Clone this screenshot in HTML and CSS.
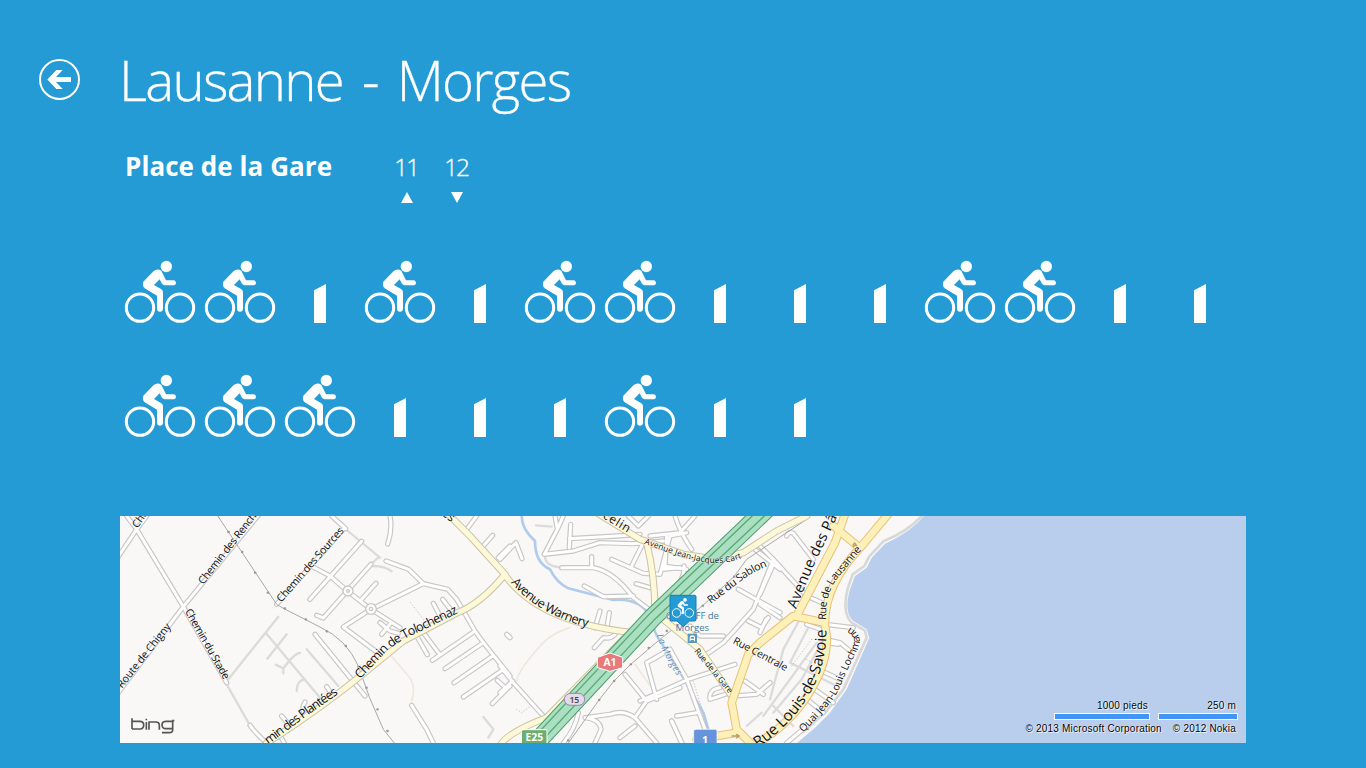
FILE: index.html
```html
<!DOCTYPE html>
<html lang="fr">
<head>
<meta charset="utf-8">
<title>Lausanne - Morges</title>
<link rel="stylesheet" href="styles.css">
</head>
<body>
<svg class="sprites" aria-hidden="true">
  <symbol id="bike" viewBox="0 0 240 240">
    <g fill="none" stroke="#fff" stroke-width="9"><circle cx="60" cy="173" r="41"/><circle cx="180" cy="173" r="41"/></g>
    <circle cx="139" cy="49.500" r="17" fill="#fff"/>
    <path fill="#fff" d="M101 63Q112 54 124 62L138 91H162Q168 93 168 98 168 105 162 106H133Q128 105 125 100L119 88 102 105 124 118Q129 121 129 128V177Q128 185 120 185 112 185 111 177V137L74 115Q66 107 70 95Z"/>
  </symbol>
  <symbol id="dock" viewBox="0 0 240 240"><path fill="#fff" d="M102 121L138 102V219H102Z"/></symbol>
</svg>
<header class="header">
  <a class="back" aria-label="Retour"><svg viewBox="0 0 123 123"><circle cx="61.500" cy="61.500" r="58.500"/><path d="M25 61.500L52 33H71L51 54H96V69H51L71 90H52Z"/></svg></a>
  <h1 class="title">Lausanne - Morges</h1>
</header>
<section class="station">
  <h2 class="station-name">Place de la Gare</h2>
  <div class="count"><span>11</span><svg viewBox="0 0 12 11"><path d="M6 0L12 11H0Z"/></svg></div>
  <div class="count"><span>12</span><svg viewBox="0 0 12 11"><path d="M0 0H12L6 11Z"/></svg></div>
</section>
<div class="slots">
  <svg><use href="#bike"/></svg><svg><use href="#bike"/></svg><svg><use href="#dock"/></svg><svg><use href="#bike"/></svg><svg><use href="#dock"/></svg><svg><use href="#bike"/></svg><svg><use href="#bike"/></svg><svg><use href="#dock"/></svg><svg><use href="#dock"/></svg><svg><use href="#dock"/></svg><svg><use href="#bike"/></svg><svg><use href="#bike"/></svg><svg><use href="#dock"/></svg><svg><use href="#dock"/></svg>
  <svg><use href="#bike"/></svg><svg><use href="#bike"/></svg><svg><use href="#bike"/></svg><svg><use href="#dock"/></svg><svg><use href="#dock"/></svg><svg><use href="#dock"/></svg><svg><use href="#bike"/></svg><svg><use href="#dock"/></svg><svg><use href="#dock"/></svg>
</div>
<div class="map">
<svg class="map-canvas" viewBox="0 0 3378 681">
  <defs>
    <g id="minor">
      <path d="M50 40L190 272M20 0L50 40 80 0M50 40L-5 122M190 272L-5 530M190 272L420 -8M190 272L320 500M390 628Q405 650 440 681M485 600L510 630M555 558Q540 580 560 600M475 650L495 685M470 265L670 40"/>
      <g transform="translate(570 0)">
        <path d="M65 0L107 38M240 0Q248 40 233 84M155 76L0 250M183 145L40 306 20 298M0 148L60 180 112 225 183 280 270 335M198 202L155 250M228 135L296 160 340 203 413 220 440 250 495 345 520 380 600 480M340 203L183 280 100 333 200 408M210 320L240 345 265 352M240 325L215 355M15 355L165 540M370 262L390 300M398 250L425 285M340 350L385 410M320 360L352 416M495 345L367 433M520 380L405 458M548 420L432 500M578 462L460 543M600 510L547 563M562 493L585 515M305 568L350 640 370 681M470 40L500 0M520 90L548 58M565 125L600 90M590 355L600 365M50 512L62 530"/>
      </g>
      <g transform="translate(1140 0)">
        <path d="M0 130L48 80 66 128M165 0L172 40 133 115 220 105 300 80 400 83 490 75M212 25L208 95M208 68L350 60 420 55M190 0L172 40M385 0L415 30 445 0M185 155L280 155M275 122V155M280 155Q340 165 400 245L460 290M253 210L310 242 400 240M335 130L430 172 480 175 500 100 510 60 560 50M430 80L395 150M408 203L450 215M490 150L560 160M300 285L285 335M328 290L320 340M345 355Q330 370 310 365L283 395M0 450L40 500 130 600M0 530L38 495M375 475L440 555 540 515M440 555L405 605 470 681M405 605Q370 580 330 595L255 605Q300 610 303 640L285 681M405 630L360 665M515 615L545 681M235 590Q225 640 190 681"/>
      </g>
      <g transform="translate(1560 0)">
        <path d="M30 60L120 50 165 0M105 0Q120 50 155 100M80 60L75 155M132 150Q138 180 95 235M70 160L120 155M40 430L90 400 140 490M90 400L20 440 50 550M0 555L145 490 285 445M140 490L195 640M110 600L170 590M270 530L210 550Q205 520 240 515M95 615L130 690M315 495L370 535M280 540L350 535 390 500M345 100L420 160M400 130L340 280 250 380 200 415M295 220L420 290M385 305L365 335 325 315M150 330L180 360 250 360"/>
      </g>
      <g transform="translate(1920 0)">
        <path d="M80 60Q85 45 100 52L160 130M0 90L40 130 140 240 185 260M40 145L0 235M0 265L60 305M0 350L18 310M140 325L195 345M195 325L280 335M195 370L240 380 270 405M195 380L235 385M80 681L140 630M175 460L240 490M150 510L220 560M135 545L190 590"/>
      </g>
    </g>
    <g id="yellow">
      <path d="M440 681Q600 580 740 465L850 375 1012 290Q1080 265 1155 175M980 -10L1050 60 1150 170Q1250 320 1540 350M1430 -10L1560 70 1690 115 1790 130 1870 110 1970 45 2060 0M1580 80Q1605 180 1605 290L1740 400 1835 540M1140 690Q1160 650 1280 605L1510 370"/>
    </g>
    <g id="gold">
      <path d="M2310 -12L2225 90Q2110 210 2115 330 2135 410 2080 510 2020 620 1900 690M2180 -20L2145 80 2035 290M2140 30L2215 92M2115 320L2020 300 1920 380 1885 415 1835 560 1850 640 1900 690M1850 650L1730 670"/>
    </g>
    <path id="l1" d="M250 207L422 -14"/><path id="l2" d="M484 260L680 37"/><path id="l3" d="M6 518L160 325"/><path id="l4" d="M194 286L316 500"/><path id="l5" d="M52 38L100 -28"/>
    <path id="l6" d="M720 490L800 406Q850 365 900 347L1030 283"/><path id="l7" d="M445 686L560 600 660 530"/><path id="l8" d="M1172 200Q1260 300 1412 336"/><path id="l9" d="M1432 -4L1534 57"/><path id="l10" d="M964 -4L1000 24"/>
    <path id="l11" d="M1572 83C1690 125 1780 165 1868 124"/><path id="l12" d="M1772 264L1850 205Q1900 165 1948 149"/><path id="l13" d="M1610 358Q1630 420 1676 486"/><path id="l15" d="M1722 406L1834 542"/><path id="l16" d="M1837 381L2004 470"/>
    <path id="l17" d="M2028 280L2085 140 2170 -35"/><path id="l18" d="M2117 312L2120 265Q2125 225 2150 190L2234 90"/><path id="l19" d="M1914 696C2050 600 2125 480 2119 330"/><path id="l20" d="M2050 650C2105 592 2150 550 2170 488L2216 392Q2230 350 2178 328"/>
  </defs>
  <rect width="3378" height="681" fill="#faf8f7"/>
  <path class="water" d="M2412 0Q2370 50 2295 83L2255 125 2240 155 2205 180 2190 220Q2170 290 2200 315L2240 340 2248 365 2220 430 2180 520 2130 590 2085 635 2020 690H3378V0Z"/>
  <path class="shore" d="M2405 0Q2365 45 2290 76L2248 121 2233 150 2198 175 2183 218Q2165 290 2195 320L2235 344 2240 365 2211 430 2170 520 2120 585 2050 648"/>
  <path class="river" d="M1205 0Q1205 40 1245 75 1245 140 1290 160 1310 200 1345 217L1480 252Q1565 245 1595 310 1600 350 1630 390L1690 485 1750 590 1765 640"/>
  <g class="alley">
    <path d="M475 302L325 490M437 350L600 545M500 355L442 428M540 411Q525 410 490 457L467 446M490 457V472M530 525Q530 495 552 490M560 400L655 510M320 505L388 625M675 38L780 125M755 142L775 125M758 150Q795 150 815 166M1090 603L1120 640 1105 665M1248 28L1295 32M1275 120Q1275 152 1325 154"/>
    <path d="M2070 325L2010 440 2150 510M2090 380L1930 600M2110 370L2045 490 1960 590M2045 300L1990 400 1950 550M1960 570L2020 630M1925 590L1880 630"/>
  </g>
  <path class="path" d="M808 413L865 480Q890 510 875 555M1350 335Q1300 350 1270 380 1195 460 1190 495M1545 445L1605 530"/>
  <path class="dots" d="M872 260L912 312M1190 580L1205 590 1230 572M1720 495L1765 640M2075 370L2015 450M2060 430L2110 465"/>
  <use href="#minor" class="minor-case"/><use href="#minor" class="minor-fill"/>
  <g class="round"><circle cx="684" cy="225" r="15"/><circle cx="753" cy="279" r="16"/><circle cx="684" cy="225" r="4"/><circle cx="753" cy="279" r="5"/></g>
  <path class="rail" d="M290 -5L470 265 492 278 600 333Q680 370 715 450 745 545 790 640L830 690M1345 681L1437 552 1482 495 1532 445 1620 370 1748 269 1842 182 1880 130 2060 10"/>
  <path class="ties" d="M325 48h1M366 108h1M405 170h1M443 230h1M494 277h1M557 310h1M620 346h1M677 390h1M715 452h1M739 515h1M772 580h1M802 645h1M1344 673h1M1437 552h1M1482 495h1M1532 445h1M1586 396h1M1640 345h1M1748 269h1M1798 222h1M1842 182h1"/>
  <use href="#yellow" class="yellow-case"/><use href="#yellow" class="yellow-fill"/>
  <use href="#gold" class="gold-case"/><use href="#gold" class="gold-fill"/>
  <path class="hwy-case" d="M1230 700L1600 302 1940 -22"/>
  <path class="hwy-fill" d="M1230 700L1600 302 1940 -22"/>
  <path class="hwy-line" d="M1218 690L1592 290 1928 -30M1238 704L1606 308 1948 -14"/>
  <g class="label">
    <text font-size="32"><textPath href="#l1" textLength="262">Chemin des Rench</textPath></text>
    <text font-size="32"><textPath href="#l2" textLength="286">Chemin des Sources</textPath></text>
    <text font-size="32"><textPath href="#l3" textLength="237">Route de Chigny</textPath></text>
    <text font-size="32"><textPath href="#l4" textLength="238">Chemin du Stade</textPath></text>
    <text font-size="32"><textPath href="#l5">Che</textPath></text>
    <text font-size="38"><textPath href="#l6" textLength="361">Chemin de Tolochenaz</textPath></text>
    <text font-size="38"><textPath href="#l7" textLength="260">min des Plantées</textPath></text>
    <text font-size="38"><textPath href="#l8" textLength="270">Avenue Warnery</textPath></text>
    <text font-size="36"><textPath href="#l9" textLength="106">rcelin</textPath></text>
    <text font-size="36"><textPath href="#l10">es</textPath></text>
    <text font-size="25"><textPath href="#l11" textLength="304">Avenue Jean-Jacques Cart</textPath></text>
    <text font-size="32"><textPath href="#l12" textLength="205">Rue du Sablon</textPath></text>
    <text font-size="28" class="blue"><textPath href="#l13" textLength="137">La Morges</textPath></text>
    <text font-size="25"><textPath href="#l15" textLength="165">Rue de la Gare</textPath></text>
    <text font-size="31"><textPath href="#l16" textLength="180">Rue Centrale</textPath></text>
    <text font-size="44"><textPath href="#l17" textLength="305">Avenue des Pâ</textPath></text>
    <text font-size="32"><textPath href="#l18" textLength="245">Rue de Lausanne</textPath></text>
    <text font-size="46"><textPath href="#l19" textLength="428">Rue Louis-de-Savoie</textPath></text>
    <text font-size="31"><textPath href="#l20" textLength="380">Quai Jean-Louis Lochmann</textPath></text>
    <text font-size="29" class="poi" x="1717" y="309" text-anchor="middle" textLength="160">Gare CFF de</text>
    <text font-size="29" class="poi" x="1717" y="344" text-anchor="middle" textLength="101">Morges</text>
  </g>
  <g class="station-icon"><rect x="1703" y="353" width="28" height="28"/><path d="M1709 377V364Q1709 358 1717 358 1725 358 1725 364V377L1721 372H1713Z" fill="#fff"/><path d="M1712 363H1722V368H1712Z"/></g>
  <path class="arrow" d="M1836 660H1858M1850 655L1858 660 1850 666M2204 88L2200 92M2204 81L2210 89 2199 87Z"/>
  <path d="M1433 424L1470 411 1508 424V455L1470 466 1433 455Z" fill="#e8797c" stroke="#fff" stroke-width="3"/>
  <text class="shield" x="1470" y="449" font-size="31">A1</text>
  <rect x="1333" y="532" width="61" height="36" rx="18" fill="#e5d9ec" stroke="#9b86a8" stroke-width="3"/>
  <text class="shield dark" x="1363" y="560" font-size="26">15</text>
  <rect x="1204" y="641" width="77" height="50" rx="5" fill="#6ead70" stroke="#fff" stroke-width="3"/>
  <text class="shield" x="1243" y="676" font-size="31">E25</text>
  <rect x="1721" y="640" width="70" height="50" rx="5" fill="#6694dc" stroke="#fff" stroke-width="2"/>
  <text class="shield" x="1755" y="683" font-size="32">1</text>
  <g class="pin"><path d="M1654 238H1724Q1728 238 1728 242V311Q1728 315 1724 315H1709L1690 332 1671 315H1654Q1650 315 1650 311V242Q1650 238 1654 238Z"/><use href="#bike" x="1651" y="236" width="76" height="76"/></g>
  <g class="bing"><path d="M36 607V639M36 616H60Q71 616 71 627 71 639 60 639H36M79 618V641M79 608V613M87 641V618H108Q118 618 118 627V641M163 614H156M156 616H137Q126 617 126 627 127 638 137 638H158M158 616V640Q159 650 148 650H126"/></g>
</svg>
<div class="scales"><span class="scale feet">1000 pieds</span><span class="scale metres">250 m</span></div>
<div class="credits"><span class="ms">© 2013 Microsoft Corporation</span><span class="nokia">© 2012 Nokia</span></div>
</div>
</body>
</html>
```
FILE: styles.css
```css
* { box-sizing: border-box; }
body { margin: 0; height: 768px; overflow: hidden; background: #259bd5; color: #fff; font-family: "Open Sans", "Noto Sans", sans-serif; }
.sprites { display: none; }
.header { display: flex; height: 140px; padding: 59px 0 0 39px; gap: 42px; }
.back { width: 41px; height: 41px; }
.back svg { display: block; width: 41px; height: 41px; fill: #fff; }
.back circle { fill: none; stroke: #fff; stroke-width: 6; }
.title { margin: -16px 0 0 -3px; font-size: 54.500px; line-height: 74px; font-weight: 300; letter-spacing: -1.700px; word-spacing: 6.500px; white-space: nowrap; -webkit-text-stroke: .3px #fff; }
.station { display: flex; height: 110px; padding: 9px 0 0 125px; }
.station-name { margin: 0; width: 257px; font-size: 26px; line-height: 34px; font-weight: 700; letter-spacing: .06px; white-space: nowrap; }
.count { width: 50px; display: flex; flex-direction: column; align-items: center; font-size: 24.500px; font-weight: 300; line-height: 36px; letter-spacing: -2px; -webkit-text-stroke: .3px #fff; }
.count span { margin-left: -2px; }
.count svg { width: 12px; height: 11px; margin-top: 7px; fill: #fff; }
.slots { display: grid; grid-template-columns: repeat(14, 80px); row-gap: 34px; padding-left: 120px; height: 266px; align-content: start; }
.slots svg { display: block; width: 80px; height: 80px; }
.map { position: relative; width: 1126px; height: 227px; margin-left: 120px; overflow: hidden; }
.map-canvas { display: block; width: 1126px; height: 227px; fill: none; stroke-linecap: round; stroke-linejoin: round; }
.water { fill: #b9ceec; }
.shore { stroke: #d8d8d8; stroke-width: 8; }
.river { stroke: #afcbee; stroke-width: 8; }
.alley { stroke: #dcdbdb; stroke-width: 7; }
.path { stroke: #eee8dc; stroke-width: 5; }
.rail { stroke: #a9a8a7; stroke-width: 3; }
.ties { stroke: #999; stroke-width: 7; }
.dots { stroke: #bbb; stroke-width: 3; stroke-dasharray: 1 8; }
.minor-case { stroke: #c8c6c6; stroke-width: 16; }
.minor-fill { stroke: #fff; stroke-width: 9; }
.round { fill: #fff; stroke: #c8c6c6; stroke-width: 4; }
.yellow-case { stroke: #cbc3a7; stroke-width: 22; }
.yellow-fill { stroke: #fdf9d8; stroke-width: 16; }
.gold-case { stroke: #e9c176; stroke-width: 26; }
.gold-fill { stroke: #fdf0b8; stroke-width: 20; }
.hwy-case { stroke: #4c9c6b; stroke-width: 58; }
.hwy-fill { stroke: #abdfc2; stroke-width: 52; }
.hwy-line { stroke: #58a873; stroke-width: 4; }
.label { fill: #111; font-weight: 500; stroke: rgba(255, 255, 255, .5); stroke-width: 4; paint-order: stroke; font-family: "Open Sans", "Noto Sans", sans-serif; }
.label .blue { fill: #5b87ac; font-style: italic; }
.label .poi { fill: #47789b; }
.station-icon { fill: #5f97b9; stroke: none; }
.arrow { stroke: #bf9c6c; stroke-width: 4; }
.shield { fill: #fff; font-weight: 700; text-anchor: middle; }
.shield.dark { fill: #444; font-weight: 600; }
.pin > path { fill: #259bd5; stroke: #167db2; stroke-width: 3; }
.bing { stroke: #555; stroke-width: 5; stroke-linecap: butt; }
.scales, .credits { position: absolute; display: flex; font: 10px/12px "Liberation Sans", sans-serif; color: #000; text-shadow: 0 0 1px #fff, 1px 1px 0 rgba(255, 255, 255, .7); text-align: right; white-space: nowrap; letter-spacing: .2px; }
.scales { right: 8px; bottom: 24px; gap: 8px; }
.scale { display: block; height: 19px; padding-right: 2px; }
.scale::after { content: ""; display: block; height: 5px; margin: 1px -2px 0 0; background: #4294f7; border: 1px solid #fff; }
.feet { width: 96px; }
.metres { width: 80px; }
.credits { right: 9px; bottom: 8px; gap: 11px; padding-right: 1px; }
```
